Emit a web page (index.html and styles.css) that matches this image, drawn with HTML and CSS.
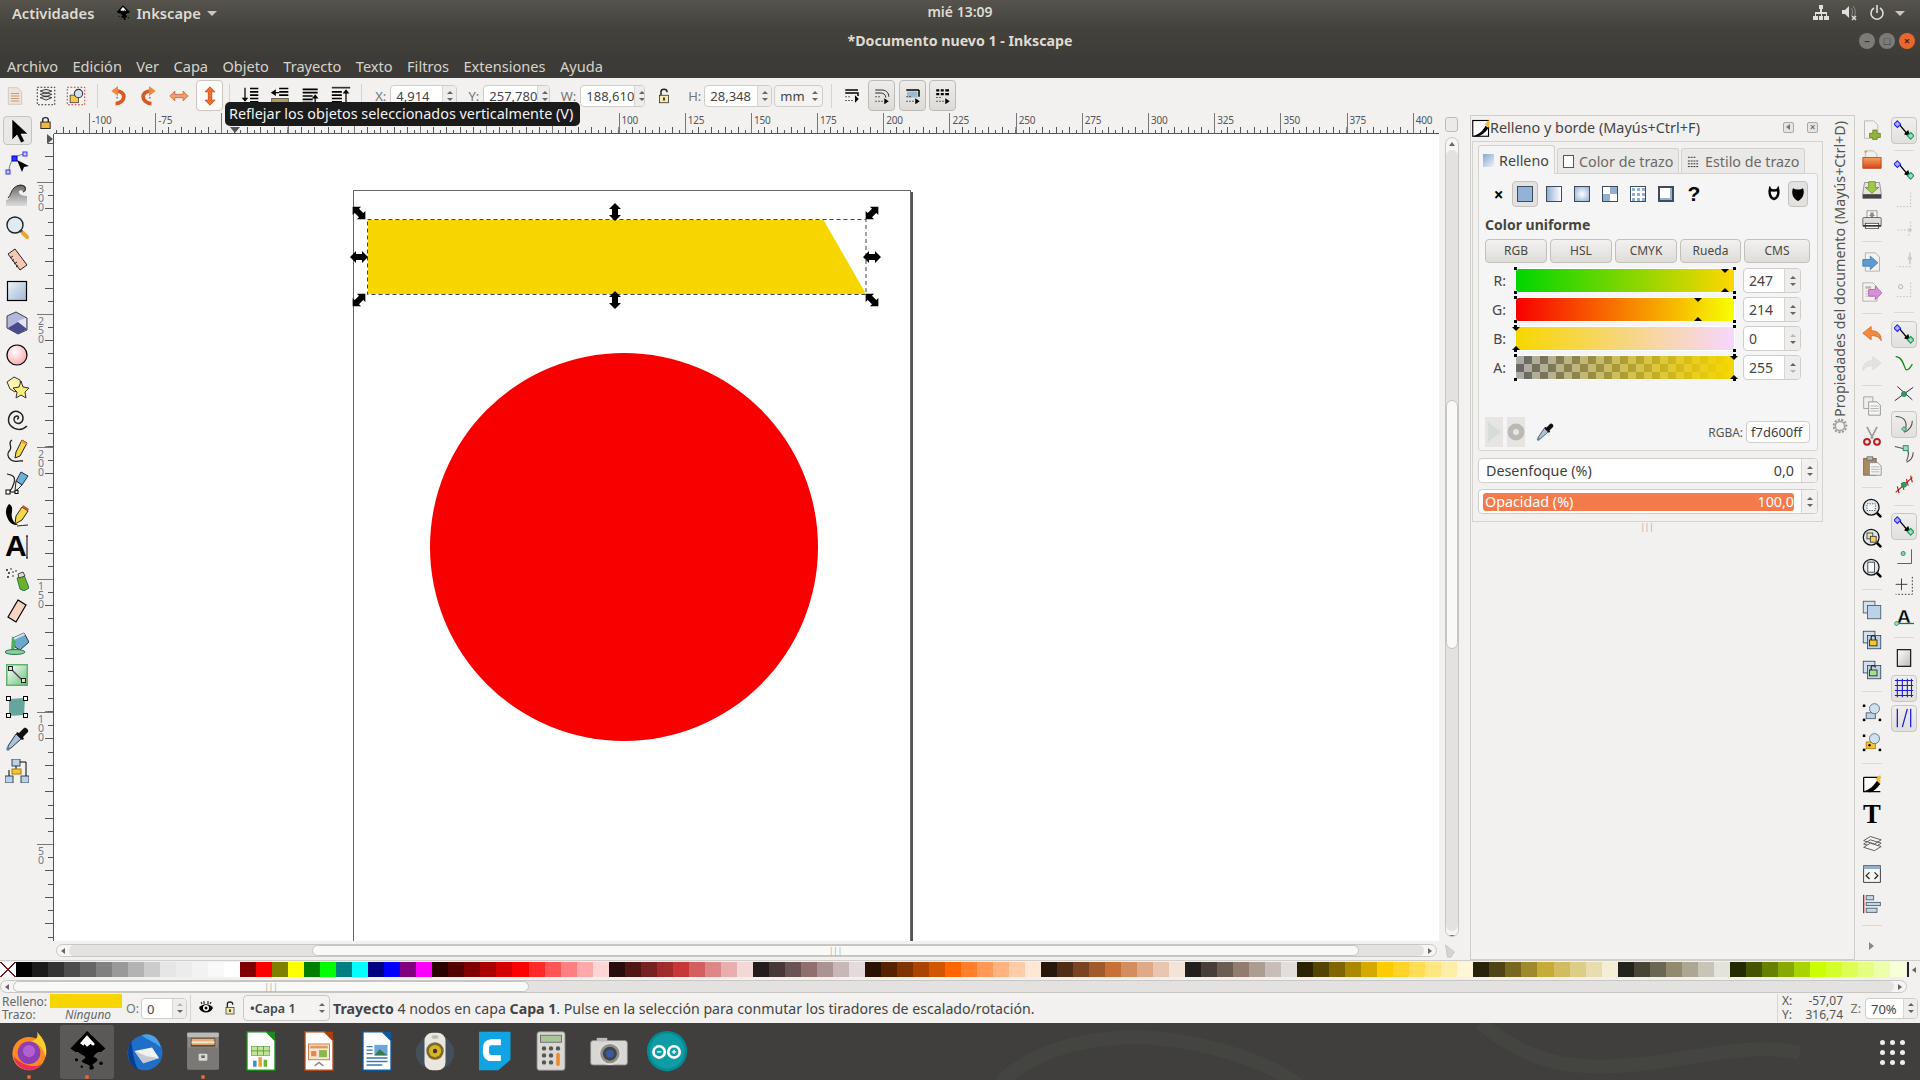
FILE: index.html
```html
<!DOCTYPE html>
<html lang="es">
<head>
  <meta charset="UTF-8">
  <title>Documento nuevo 1 - Inkscape</title>
  <link rel="stylesheet" href="styles.css">
</head>
<body>
<svg class="defs" xmlns="http://www.w3.org/2000/svg">
  <defs>
    <linearGradient id="gBlue" x1="0" y1="0" x2="1" y2="1"><stop offset="0" stop-color="#eef3f8"/><stop offset="1" stop-color="#9db9d3"/></linearGradient>
    <linearGradient id="gGrey" x1="0" y1="0" x2="0" y2="1"><stop offset="0" stop-color="#666"/><stop offset="1" stop-color="#ddd"/></linearGradient>
    <linearGradient id="gOrange" x1="0" y1="0" x2="0" y2="1"><stop offset="0" stop-color="#f5a25e"/><stop offset="1" stop-color="#d9431e"/></linearGradient>
    <radialGradient id="gPink" cx=".4" cy=".35" r=".7"><stop offset="0" stop-color="#fff"/><stop offset="1" stop-color="#fba6ac"/></radialGradient>
    <linearGradient id="gGradW" x1="0" y1="0" x2="1" y2="1"><stop offset="0" stop-color="#fff"/><stop offset="1" stop-color="#6cc27a"/></linearGradient>
    <linearGradient id="gPgrey" x1="0" y1="0" x2="1" y2="1"><stop offset="0" stop-color="#fff"/><stop offset="1" stop-color="#bbb"/></linearGradient>

    <symbol id="i-select" viewBox="0 0 24 24"><path fill="#000" stroke="#fff" stroke-width=".6" d="M6 0v21l5-5 4 8 3.6-1.8L15 15h7z"/></symbol>
    <symbol id="i-node" viewBox="0 0 24 24"><path fill="none" stroke="#777" d="M4 21C4 10 10 4 20 3"/><rect x="7" y="5" width="5" height="5" fill="#33f" stroke="#00c"/><rect x="18" y="1" width="4" height="4" fill="#ccd" stroke="#33f"/><rect x="1" y="19" width="4" height="4" fill="#ccd" stroke="#33f"/><path d="M12 9l12 6-5 1-2 5z"/></symbol>
    <symbol id="i-tweak" viewBox="0 0 24 24"><path fill="url(#gGrey)" d="M1 23v-6c4 0 4-5 6-9 3-5 9-8 13-5 2 2 1 6-2 6-1-3-5-2-4 1 1 2 4 3 8 3v10z"/><path fill="none" stroke="#222" d="M3 15c3-3 3-7 6-10 3-3 8-4 11-1 1 2 0 5-2 5"/></symbol>
    <symbol id="i-zoom" viewBox="0 0 24 24"><circle cx="10" cy="10" r="8" fill="#dfeaf2" stroke="#222" stroke-width="1.4"/><path stroke="#333" stroke-width="3" d="M15 15l3 3"/><path stroke="#e8a72c" stroke-width="4" stroke-linecap="round" d="M18 18l4 4"/></symbol>
    <symbol id="i-measure" viewBox="0 0 24 24"><path fill="#f6c9b4" stroke="#222" d="M3 7l7-5 12 16-7 5z"/><path stroke="#222" d="M5 11l3-2M7 14l2-1.500M9 17l3-2M11 20l2-1.500"/></symbol>
    <symbol id="i-rect" viewBox="0 0 24 24"><rect x="2.500" y="2.500" width="19" height="19" fill="url(#gBlue)" stroke="#000" stroke-width="1.200"/></symbol>
    <symbol id="i-3d" viewBox="0 0 24 24"><path fill="#b5b7dc" stroke="#444" d="M2 5l9-4 11 6v12l-9 4-11-6z"/><path fill="#e4e4f3" d="M13 22l0-12 8-3v11z"/><path fill="#4a4a8f" d="M3 17l10-6 9 7-9 5z"/></symbol>
    <symbol id="i-circle" viewBox="0 0 24 24"><circle cx="12" cy="12" r="10" fill="url(#gPink)" stroke="#000" stroke-width="1.200"/></symbol>
    <symbol id="i-star" viewBox="0 0 24 24"><path fill="#fdf2b0" stroke="#333" d="M2 7l7-5 6 3 1 6-6 6-5-3z"/><path fill="#f6ee7a" stroke="#333" d="M16 6l2 6 6 1-4 4 1 6-5-3-5 3 1-6-4-4 6-1z"/></symbol>
    <symbol id="i-spiral" viewBox="0 0 24 24"><path fill="none" stroke="#222" stroke-width="1.500" d="M12 12c2 0 2-3 0-3-3 0-4 4-2 6 3 3 8 1 8-4 0-5-6-8-10-6-5 3-6 10-2 14 4 4 11 5 16 0"/></symbol>
    <symbol id="i-pencil" viewBox="0 0 24 24"><path fill="none" stroke="#222" stroke-width="1.300" d="M7 1C2 4 8 8 5 11s-3 7 1 10 8 0 12 1"/><path fill="#f6d64a" stroke="#222" d="M17 1l5 3-7 13-5 2 1-6z"/><path fill="#f39c2a" d="M17 1l5 3-1 2-5-3z"/></symbol>
    <symbol id="i-pen" viewBox="0 0 24 24"><path fill="none" stroke="#222" stroke-width="1.200" d="M2 3c5 1 9 2 7 9-1 4-3 7-5 9"/><rect x="1" y="19" width="4" height="4" fill="#fff" stroke="#000"/><path stroke="#000" d="M5 21h6"/><rect x="10" y="19.500" width="3" height="3" fill="#fff" stroke="#000"/><path fill="#6fb0d8" stroke="#234" d="M16 1l7 4-6 9-6-4z"/><path fill="#eee" stroke="#222" d="M11 10l6 4-4 4-3 2z"/></symbol>
    <symbol id="i-callig" viewBox="0 0 24 24"><path d="M4 1c-5 6-3 12 0 17 3 4 6 4 9 4-6-3-7-9-6-13 0-3 1-6-3-8z"/><path fill="#f6d64a" stroke="#222" d="M17 4l6 4-6 9-7 4 1-8z"/><path fill="#c52" d="M18 2l6 4-1 2-6-4z"/><path fill="none" stroke="#222" d="M12 23c4 0 7-1 11-1"/></symbol>
    <symbol id="i-text" viewBox="0 0 24 24"><text x="0" y="21" class="svg-a">A</text><path stroke="#000" fill="none" d="M21 1h2M21 23h2M22 1v22"/></symbol>
    <symbol id="i-spray" viewBox="0 0 24 24"><path fill="#6fb02a" stroke="#275" d="M12 11l7-3 5 13-5 3-4-2z"/><path fill="#ddd" stroke="#444" d="M13 7l5-2 2 4-6 2z"/><g fill="#222"><circle cx="2" cy="3" r="1"/><circle cx="6" cy="2" r=".8"/><circle cx="4" cy="6" r="1"/><circle cx="8" cy="5" r=".8"/><circle cx="3" cy="10" r="1"/><circle cx="8" cy="9" r=".8"/><circle cx="11" cy="4" r=".8"/></g></symbol>
    <symbol id="i-eraser" viewBox="0 0 24 24"><path fill="#f7d3c4" stroke="#000" stroke-width="1.200" d="M13 1l8 5-10 17-8-5z"/></symbol>
    <symbol id="i-bucket" viewBox="0 0 24 24"><path fill="#6da7c9" stroke="#234" d="M8 7l11-5 5 9-9 8-5-3z"/><path fill="#cfe3ef" d="M8 7l11-5 1 2-11 5z"/><path fill="#4caf60" d="M7 5l4 6-2 8H6z"/><ellipse cx="10" cy="21" rx="10" ry="2.500" fill="#8ccf96" stroke="#275"/></symbol>
    <symbol id="i-gradient" viewBox="0 0 24 24"><rect x="1" y="1" width="22" height="22" fill="#5cb56a"/><rect x="2.500" y="2.500" width="19" height="19" fill="url(#gGradW)"/><path stroke="#444" stroke-width="1.300" d="M6 6l12 12"/><rect x="3.500" y="3.500" width="4" height="4" fill="#ddd" stroke="#222"/><rect x="16.500" y="15.500" width="4" height="4" fill="#ddd" stroke="#222"/></symbol>
    <symbol id="i-mesh" viewBox="0 0 24 24"><path fill="#65a59b" d="M4 4l16-1-1 17-15 1z"/><g fill="#fff" stroke="#000"><rect x="1.500" y="1.500" width="4" height="4"/><rect x="18.500" y="1.500" width="4" height="4"/><rect x="1.500" y="18.500" width="4" height="4"/><rect x="18.500" y="18.500" width="4" height="4"/></g></symbol>
    <symbol id="i-dropper" viewBox="0 0 24 24"><path fill="#111" d="M14 6l5-5c2-1 5 2 4 4l-5 5 1 2-2 1-6-6 1-2z"/><path fill="#a8c4d8" stroke="#334" d="M11 7l5 5L6 21l-3 1 0-3z"/><circle cx="3" cy="22" r="1.800" fill="#5a80a0"/></symbol>
    <symbol id="i-connector" viewBox="0 0 24 24"><g fill="#b9d2e8" stroke="#345"><rect x="7" y="0" width="8" height="7"/><rect x="0" y="17" width="8" height="7"/><rect x="16" y="17" width="8" height="7"/></g><path fill="none" stroke="#000" d="M15 3h6v14M11 7v4M4 17v-6"/><rect x="7" y="10" width="9" height="5" fill="#f6c62a" stroke="#a70"/></symbol>

    <symbol id="a-selall" viewBox="0 0 24 24"><path fill="#efe4d6" stroke="#c9c4bd" d="M4 2h11l5 5v15H4z"/><path fill="none" stroke="#b88c70" d="M7 9h10M7 12h10M7 15h10M7 18h10"/></symbol>
    <symbol id="a-layers" viewBox="0 0 24 24"><rect x="1.500" y="1.500" width="21" height="21" fill="none" stroke="#000" stroke-dasharray="2 2"/><path fill="#ddd" stroke="#222" d="M5 14l7-2 7 2-7 3zM5 10l7-2 7 2-7 3zM5 6l7-2 7 2-7 3z"/></symbol>
    <symbol id="a-touch" viewBox="0 0 24 24"><rect x="1.500" y="1.500" width="21" height="21" fill="none" stroke="#c01010" stroke-dasharray="2 2"/><rect x="5" y="11" width="10" height="9" fill="#f6c94a" stroke="#444"/><circle cx="15" cy="9" r="5" fill="#cfe0ee" stroke="#334" stroke-width="1.300"/></symbol>
    <symbol id="a-ccw" viewBox="0 0 24 24"><path fill="none" stroke="#d65a22" stroke-width="4.500" d="M10 6c6 0 9 3 9 7s-4 8-10 8"/><path fill="#ef8648" d="M12 0v12L4 6z"/><circle cx="11" cy="14" r="1" fill="#c53"/></symbol>
    <symbol id="a-cw" viewBox="0 0 24 24"><path fill="none" stroke="#d65a22" stroke-width="4.500" d="M14 6C8 6 5 9 5 13s4 8 10 8"/><path fill="#ef8648" d="M12 0v12l8-6z"/><circle cx="13" cy="14" r="1" fill="#c53"/></symbol>
    <symbol id="a-fliph" viewBox="0 0 24 24"><path fill="#f0a070" stroke="#c86a38" d="M1 12l6-6v4h10V6l6 6-6 6v-4H7v4z"/></symbol>
    <symbol id="a-flipv" viewBox="0 0 24 24"><path fill="#f26d28" stroke="#c84a18" d="M12 1l6 6h-4v10h4l-6 6-6-6h4V7H6z"/></symbol>
    <symbol id="a-bottom" viewBox="0 0 24 24"><path stroke="#000" stroke-width="2" d="M12 3h10M12 7h10M12 11h10M12 15h10M12 19h10"/><path stroke="#000" stroke-width="1.500" d="M6 2v14"/><path d="M2 14h8l-4 5zM1 21h10v2H1z"/></symbol>
    <symbol id="a-down" viewBox="0 0 24 24"><path stroke="#000" stroke-width="2" d="M11 3h11M11 7h11M11 11h11"/><path stroke="#000" stroke-width="1.500" d="M4 8h7"/><path d="M7 4v8L1 8z"/><rect x="2" y="15" width="20" height="6" fill="#b29a60" stroke="#554"/></symbol>
    <symbol id="a-up" viewBox="0 0 24 24"><path stroke="#000" stroke-width="2" d="M2 4h18M2 8h18M2 12h12M2 16h12M2 20h12"/><path stroke="#000" stroke-width="1.500" d="M17 21v-7"/><path d="M13 15l4-5 4 5z"/></symbol>
    <symbol id="a-top" viewBox="0 0 24 24"><rect x="1" y="1" width="22" height="2" fill="#333"/><path stroke="#000" stroke-width="2" d="M1 7h12M1 11h12M1 15h12M1 19h12"/><path stroke="#000" stroke-width="1.500" d="M18 22V8"/><path d="M14 9l4-5 4 5z"/></symbol>
    <symbol id="a-lock" viewBox="0 0 24 24"><path fill="none" stroke="#222" stroke-width="2" d="M8 11V6c0-4 8-4 8 0v1"/><rect x="6" y="11" width="12" height="10" fill="#f6ecb0" stroke="#222"/><rect x="11" y="14" width="2" height="4"/></symbol>
    <symbol id="a-t1" viewBox="0 0 24 24"><path fill="none" stroke="#000" stroke-width="2" d="M3 4h17M3 8h17v4"/><path fill="none" stroke="#000" d="M3 13h7M3 18h10" stroke-dasharray="2 2"/><path d="M19 12l5 5-5 5z" transform="translate(-3 -1)"/></symbol>
    <symbol id="a-t2" viewBox="0 0 24 24"><path fill="none" stroke="#222" stroke-width="1.300" d="M3 4h8c6 0 10 3 10 9M3 8h7c4 0 7 2 7 6"/><path fill="none" stroke="#000" stroke-dasharray="2 2" d="M3 13h6M3 19h10"/><path d="M15 15v8l6-4z"/></symbol>
    <symbol id="a-t3" viewBox="0 0 24 24"><path fill="#9fb9d2" d="M4 6h14v8H4z"/><path fill="none" stroke="#000" stroke-width="2" d="M3 4h17M20 4v9"/><path fill="none" stroke="#000" stroke-dasharray="2 2" d="M3 13h6M3 19h10"/><path d="M15 15v8l6-4z"/></symbol>
    <symbol id="a-t4" viewBox="0 0 24 24"><g fill="#000"><rect x="3" y="3" width="4" height="3"/><rect x="9" y="3" width="4" height="3"/><rect x="15" y="3" width="5" height="3"/><rect x="3" y="8" width="4" height="3"/><rect x="9" y="8" width="4" height="3"/><rect x="15" y="8" width="5" height="3"/></g><path fill="none" stroke="#000" stroke-dasharray="2 2" d="M3 14h6M3 19h10"/><path d="M15 15v8l6-4z"/></symbol>

    <symbol id="r-new" viewBox="0 0 24 24"><path fill="#f3f2f0" stroke="#b4b2ae" d="M3 1h11l5 5v16H3z"/><path fill="#95b23a" stroke="#6c8526" d="M13 12h5v4h4v5h-4v3h-5v-3H9v-5h4z"/></symbol>
    <symbol id="r-open" viewBox="0 0 24 24"><path fill="#f1efea" stroke="#b7b3ab" d="M4 1h10l4 4v6H4z"/><path fill="#d69a52" d="M3 1h3v2H3z"/><path fill="url(#gOrange)" stroke="#b04818" d="M1 9h22v13H1z"/></symbol>
    <symbol id="r-save" viewBox="0 0 24 24"><path fill="#e4e3df" stroke="#888" d="M3 3h18l2 13v6H1v-6z"/><path fill="#9cc94a" stroke="#6c9226" d="M8 2h8v7h4l-8 7-8-7h4z"/><rect x="1" y="17" width="22" height="5" fill="#444"/></symbol>
    <symbol id="r-print" viewBox="0 0 24 24"><rect x="6" y="1" width="12" height="9" fill="#f8f8f6" stroke="#888"/><path fill="#888" d="M10 3h4v3h2l-4 3-4-3h2z"/><rect x="1" y="9" width="22" height="10" rx="1" fill="#ddd" stroke="#555"/><rect x="4" y="16" width="16" height="6" fill="#fff" stroke="#444"/><rect x="1" y="18" width="22" height="2" fill="#333"/></symbol>
    <symbol id="r-import" viewBox="0 0 24 24"><path fill="#f3f2f0" stroke="#aaa" d="M4 1h12l5 5v17H4z"/><path fill="#5e9bd0" stroke="#3e78ad" d="M1 9h9V5l9 8-9 8v-4H1z"/></symbol>
    <symbol id="r-export" viewBox="0 0 24 24"><path fill="#f3f2f0" stroke="#aaa" d="M1 1h12l5 5v17H1z"/><path fill="#c9b5a8" d="M4 5h7v3H4z"/><path stroke="#bbb" d="M4 11h9M4 14h9M4 17h9"/><path fill="#d88fd8" stroke="#a860a8" d="M8 9h8V5l8 8-8 8v-4H8z"/></symbol>
    <symbol id="r-undo" viewBox="0 0 24 24"><path fill="#f08a40" stroke="#d26a20" d="M11 3v5c7 0 12 3 12 12-3-5-6-6-12-6v5L1 11z"/></symbol>
    <symbol id="r-redo" viewBox="0 0 24 24"><path fill="#e3e2e0" stroke="#dcdbd9" d="M13 3v5C6 8 1 11 1 20c3-5 6-6 12-6v5l10-8z"/></symbol>
    <symbol id="r-copy" viewBox="0 0 24 24"><path fill="#eee" stroke="#9a9a9a" d="M2 1h11v14H2z"/><path fill="#f6f6f5" stroke="#888" d="M8 7h10l4 4v12H8z"/><path stroke="#aaa" d="M10 12h10M10 15h10M10 18h10"/></symbol>
    <symbol id="r-cut" viewBox="0 0 24 24"><path fill="none" stroke="#999" stroke-width="2" d="M6 1l7 14M18 1l-7 14"/><circle cx="6" cy="19" r="3.500" fill="none" stroke="#bb2020" stroke-width="2.400"/><circle cx="18" cy="19" r="3.500" fill="none" stroke="#bb2020" stroke-width="2.400"/></symbol>
    <symbol id="r-paste" viewBox="0 0 24 24"><rect x="2" y="3" width="15" height="20" fill="#a98a62" stroke="#7a5f3e"/><rect x="6" y="1" width="7" height="4" fill="#bbb" stroke="#666"/><path fill="#f6f6f5" stroke="#888" d="M9 8h10l4 4v11H9z"/><path stroke="#aaa" d="M11 13h10M11 16h10M11 19h10"/></symbol>
    <symbol id="r-zoomsel" viewBox="0 0 24 24"><circle cx="11" cy="11" r="9.500" fill="#dde8f0" stroke="#111" stroke-width="1.500"/><rect x="6" y="7" width="10" height="8" fill="#fff" stroke="#333" stroke-dasharray="1.500 1.500"/><path stroke="#000" stroke-width="3" d="M18 18l5 5"/></symbol>
    <symbol id="r-zoomdraw" viewBox="0 0 24 24"><circle cx="11" cy="11" r="9.500" fill="#dde8f0" stroke="#111" stroke-width="1.500"/><rect x="6" y="6" width="7" height="7" fill="#f6e4a0" stroke="#333"/><rect x="10" y="10" width="7" height="7" fill="#f6d25a" stroke="#333"/><path stroke="#000" stroke-width="3" d="M18 18l5 5"/></symbol>
    <symbol id="r-zoompage" viewBox="0 0 24 24"><circle cx="11" cy="11" r="9.500" fill="#dde8f0" stroke="#111" stroke-width="1.500"/><rect x="7" y="5" width="8" height="12" fill="#fff" stroke="#333"/><path stroke="#000" stroke-width="3" d="M18 18l5 5"/></symbol>
    <symbol id="r-dup" viewBox="0 0 24 24"><rect x="1.500" y="1.500" width="14" height="14" fill="#d3e1ee" stroke="#456"/><rect x="6.500" y="6.500" width="16" height="16" fill="#bcd2e6" stroke="#456"/></symbol>
    <symbol id="r-clone" viewBox="0 0 24 24"><rect x="1.500" y="1.500" width="14" height="14" fill="#d3e1ee" stroke="#345"/><rect x="6.500" y="6.500" width="16" height="16" fill="#bcd2e6" stroke="#345"/><path fill="none" stroke="#222" stroke-width="1.500" d="M11 12V9c0-3 5-3 5 0v3"/><rect x="9" y="12" width="9" height="7" fill="#f6c62a" stroke="#222"/></symbol>
    <symbol id="r-unclone" viewBox="0 0 24 24"><rect x="1.500" y="1.500" width="14" height="14" fill="#d3e1ee" stroke="#345"/><rect x="6.500" y="6.500" width="16" height="16" fill="#bcd2e6" stroke="#345"/><path fill="none" stroke="#222" stroke-width="1.500" d="M11 12V9c0-3 5-3 5 0"/><rect x="9" y="12" width="9" height="7" fill="#a8e08a" stroke="#222"/></symbol>
    <symbol id="r-group" viewBox="0 0 24 24"><g fill="#000"><rect x="1" y="3" width="3" height="3"/><rect x="1" y="20" width="3" height="3"/><rect x="20" y="20" width="3" height="3"/></g><rect x="5" y="13" width="11" height="7" fill="#bcd2e6" stroke="#456"/><circle cx="15" cy="8" r="6" fill="#cfe0ee" stroke="#567"/></symbol>
    <symbol id="r-ungroup" viewBox="0 0 24 24"><g fill="#000"><rect x="1" y="3" width="3" height="3"/><rect x="1" y="20" width="3" height="3"/><rect x="20" y="20" width="3" height="3"/></g><rect x="5" y="12" width="11" height="8" fill="#f6c62a" stroke="#a70"/><circle cx="15" cy="8" r="6" fill="#cfe0ee" stroke="#567"/><circle cx="9" cy="16" r="1.500"/></symbol>
    <symbol id="r-fill" viewBox="0 0 24 24"><path fill="#fff" d="M1 4h21v17H1z"/><path stroke="#000" stroke-width="1.500" fill="none" d="M2 4h20M2 4v17h20"/><path d="M1 21c8-2 13-7 17-13l4 4c-4 5-8 9-12 10z"/><path fill="#f6bb2a" d="M16 6l6-5v11z"/></symbol>
    <symbol id="r-textfont" viewBox="0 0 24 24"><text x="12" y="23" class="svg-t">T</text></symbol>
    <symbol id="r-layers" viewBox="0 0 24 24"><path fill="#f3f3f2" stroke="#444" d="M2 8l8-5 13 4-8 5zM2 12l8-5 13 4-8 5z"/><path fill="#f3f3f2" stroke="#444" d="M2 16l8-5 13 4-8 5z"/></symbol>
    <symbol id="r-xml" viewBox="0 0 24 24"><rect x="2" y="2" width="20" height="20" fill="#f6f6f5" stroke="#222"/><rect x="2" y="2" width="20" height="4" fill="#8fb0cc"/><path fill="none" stroke="#222" stroke-width="1.500" d="M9 10l-4 4 4 4M15 10l4 4-4 4"/></symbol>
    <symbol id="r-align" viewBox="0 0 24 24"><path stroke="#b02020" stroke-width="1.600" d="M2 1v22"/><g fill="#c3d6e8" stroke="#456"><rect x="5" y="2" width="9" height="5"/><rect x="5" y="10" width="17" height="4"/><rect x="5" y="17" width="13" height="5"/></g></symbol>

    <symbol id="s-snap" viewBox="0 0 24 24"><path stroke="#000" stroke-width="1.500" d="M6 5l11 13"/><path d="M20 20l-8-3 5-5z"/><path fill="#aab2ff" stroke="#22f" stroke-width="1.300" d="M4 1l4 4-4 4-4-4z"/><path fill="#9fdcb0" stroke="#196" stroke-width="1.300" d="M20 15l4 4-4 4-4-4z"/></symbol>
    <symbol id="s-bbox" viewBox="0 0 24 24"><path fill="none" stroke="#bbb" stroke-dasharray="2 2" d="M20 3v17H3"/></symbol>
    <symbol id="s-edge" viewBox="0 0 24 24"><path fill="none" stroke="#bbb" stroke-dasharray="2 2" d="M20 2v10H3M18 19v-5"/><circle cx="19" cy="12" r="2.300" fill="#ccc"/></symbol>
    <symbol id="s-mid" viewBox="0 0 24 24"><path fill="none" stroke="#bbb" stroke-dasharray="2 2" d="M20 20H3"/><path stroke="#ccc" stroke-width="2" d="M19 3v14"/><circle cx="19" cy="10" r="2.500" fill="#ccc"/></symbol>
    <symbol id="s-corner" viewBox="0 0 24 24"><path fill="none" stroke="#bbb" stroke-dasharray="2 2" d="M20 3v17H3"/><circle cx="8" cy="8" r="2.500" fill="#eee" stroke="#aaa"/></symbol>
    <symbol id="s-curve" viewBox="0 0 24 24"><path fill="none" stroke="#0a8a0a" stroke-width="1.500" d="M2 3c10 0 10 16 13 16s5-3 7-7"/></symbol>
    <symbol id="s-cross" viewBox="0 0 24 24"><path stroke="#333" stroke-width="1.200" d="M1 20L23 4M4 3l18 16"/><circle cx="12" cy="12" r="3" fill="#3a9a4a" stroke="#186"/></symbol>
    <symbol id="s-smooth" viewBox="0 0 24 24"><path fill="none" stroke="#555" stroke-width="1.300" d="M2 3c10 0 14 6 12 15M22 8c0 6-3 11-10 14"/><path fill="#8fd0a0" stroke="#186" d="M12 15l3 3-3 3-3-3z"/></symbol>
    <symbol id="s-cusp" viewBox="0 0 24 24"><path fill="none" stroke="#555" stroke-width="1.300" d="M1 3l12 3c6 2 5 8 2 14M23 10c0 6-3 10-8 12"/><rect x="11" y="2" width="6" height="6" fill="#9fdcb0" stroke="#186"/></symbol>
    <symbol id="s-path" viewBox="0 0 24 24"><path stroke="#c01010" stroke-width="1.300" d="M2 22L22 4"/><path stroke="#c01010" stroke-width="1.300" d="M4 15l2 8M9 11l3 8M15 6l2 8M20 2l2 8"/><circle cx="12" cy="13" r="3" fill="#3a9a4a" stroke="#186"/></symbol>
    <symbol id="s-page" viewBox="0 0 24 24"><path fill="none" stroke="#444" d="M21 4v17H4"/><circle cx="11" cy="9" r="2.500" fill="#8fd0a0" stroke="#186"/></symbol>
    <symbol id="s-center" viewBox="0 0 24 24"><path stroke="#222" d="M2 10h14M9 3v14"/><path fill="none" stroke="#222" stroke-dasharray="2 2" d="M22 1v21H2"/></symbol>
    <symbol id="s-text" viewBox="0 0 24 24"><text x="12" y="20" class="svg-a2">A</text><path stroke="#0a8a0a" stroke-width="1.500" d="M4 21h20"/><path fill="#9fdcb0" stroke="#186" d="M3 18l3 3-3 3-3-3z"/></symbol>
    <symbol id="s-pageb" viewBox="0 0 24 24"><rect x="4" y="2" width="16" height="20" fill="url(#gPgrey)" stroke="#111" stroke-width="1.400"/></symbol>
    <symbol id="s-grid" viewBox="0 0 24 24"><path stroke="#1a1ae0" stroke-width="1.300" fill="none" d="M1 3h22M1 9h22M1 15h22M1 21h22M4 1v22M10 1v22M16 1v22M21 1v22"/></symbol>
    <symbol id="s-guide" viewBox="0 0 24 24"><path stroke="#1a1ae0" stroke-width="1.500" d="M4 1v22M20 1v22M10 23L16 1"/></symbol>

    <symbol id="p-fillstroke" viewBox="0 0 24 24"><rect x="1" y="2" width="21" height="21" fill="#fff" stroke="#000" stroke-width="1.500"/><path d="M1 23c8-2 14-8 17-14l4 3c-4 6-9 10-14 11z"/><path fill="#f6bb2a" d="M17 7l6-6v11z"/></symbol>
    <symbol id="p-logo" viewBox="0 0 48 48"><path d="M24 1L5 21l6 4h3c2 3 7 3 8 6 1 2-5 3-4 5s8 3 9 5c1 2-2 3 1 4s5-2 3-4 2-3 4-5 1-4-3-5c-2-1 3-5 5-6h3l5-4z"/><path fill="#fff" d="M24 6l-8 9 4 3 1-2 3 3 4-3 3 2 2-2z"/><circle cx="40" cy="38" r="2"/><circle cx="12" cy="34" r="1.800"/><circle cx="18" cy="42" r="1.300"/></symbol>
  </defs>
</svg>

<header class="topbar">
  <div class="topbar-left"><span class="act">Actividades</span><svg class="ico-logo"><use href="#p-logo"/></svg><span class="act">Inkscape</span><i class="caret"></i></div>
  <div class="clock">mié 13:09</div>
  <div class="topbar-right">
    <svg class="tray" viewBox="0 0 16 16"><path fill="#e0dfdb" d="M6 0h4v4H9v3h5v4h2v4h-5v-4h2V9H9v2h1v4H6v-4h2V9H3v2h2v4H0v-4h2V7h5V4H6z"/></svg>
    <svg class="tray" viewBox="0 0 16 16"><path fill="#e0dfdb" d="M1 5h3l4-4v12L4 9H1z"/><path fill="none" stroke="#8e8d88" d="M10 3c2 2 2 6 0 8M12 1c3 3 3 9 0 12"/><path stroke="#e0dfdb" stroke-width="1.500" d="M11 11l4 4M15 11l-4 4"/></svg>
    <svg class="tray" viewBox="0 0 16 16"><path fill="none" stroke="#e0dfdb" stroke-width="1.600" d="M5 3a6 6 0 1 0 6 0M8 0v8"/></svg>
    <i class="caret"></i>
  </div>
</header>
<div class="titlebar">
  <span class="title">*Documento nuevo 1 - Inkscape</span>
  <div class="wbtns"><span class="wbtn">–</span><span class="wbtn">□</span><span class="wbtn close">×</span></div>
</div>
<nav class="menubar">
  <a>Archivo</a><a>Edición</a><a>Ver</a><a>Capa</a><a>Objeto</a><a>Trayecto</a><a>Texto</a><a>Filtros</a><a>Extensiones</a><a>Ayuda</a>
</nav>

<div class="toolbar">
  <span class="tb"><svg class="ic20"><use href="#a-selall"/></svg></span>
  <span class="tb"><svg class="ic20"><use href="#a-layers"/></svg></span>
  <span class="tb"><svg class="ic20"><use href="#a-touch"/></svg></span>
  <span class="tb-sep sep12"></span>
  <span class="tb"><svg class="ic20"><use href="#a-ccw"/></svg></span>
  <span class="tb"><svg class="ic20"><use href="#a-cw"/></svg></span>
  <span class="tb"><svg class="ic20"><use href="#a-fliph"/></svg></span>
  <span class="tb"><span class="tb-on"><svg class="ic20"><use href="#a-flipv"/></svg></span></span>
  <span class="tb-sep"></span>
  <span class="tb"><svg class="ic20"><use href="#a-bottom"/></svg></span>
  <span class="tb"><svg class="ic20"><use href="#a-down"/></svg></span>
  <span class="tb"><svg class="ic20"><use href="#a-up"/></svg></span>
  <span class="tb"><svg class="ic20"><use href="#a-top"/></svg></span>
  <span class="tb-sep"></span>
  <label class="lbl l-x">X:</label>
  <div class="spin s-x"><span class="val">4,914</span><span class="arrows"><i class="up"></i><i class="down"></i></span></div>
  <label class="lbl l-y">Y:</label>
  <div class="spin s-x"><span class="val">257,780</span><span class="arrows"><i class="up"></i><i class="down"></i></span></div>
  <label class="lbl l-w">W:</label>
  <div class="spin s-w"><span class="val">188,610</span><span class="arrows"><i class="up"></i><i class="down"></i></span></div>
  <span class="lock-box"><svg class="ic18"><use href="#a-lock"/></svg></span>
  <label class="lbl l-h">H:</label>
  <div class="spin s-h"><span class="val">28,348</span><span class="arrows"><i class="up"></i><i class="down"></i></span></div>
  <div class="spin s-unit"><span class="val">mm</span><span class="arrows plain"><i class="up"></i><i class="down"></i></span></div>
  <span class="tb-sep sep16"></span>
  <span class="tb tb26"><svg class="ic18"><use href="#a-t1"/></svg></span>
  <span class="tb-on bt1"><svg class="ic18"><use href="#a-t2"/></svg></span>
  <span class="tb-on bt2"><svg class="ic18"><use href="#a-t3"/></svg></span>
  <span class="tb-on bt3"><svg class="ic18"><use href="#a-t4"/></svg></span>
</div>

<div class="work">
  <aside class="tools">
    <span class="tool active"><svg class="ic24"><use href="#i-select"/></svg></span>
    <span class="tool"><svg class="ic24"><use href="#i-node"/></svg></span>
    <span class="tool"><svg class="ic24"><use href="#i-tweak"/></svg></span>
    <span class="tool"><svg class="ic24"><use href="#i-zoom"/></svg></span>
    <span class="tool"><svg class="ic24"><use href="#i-measure"/></svg></span>
    <span class="tool"><svg class="ic24"><use href="#i-rect"/></svg></span>
    <span class="tool"><svg class="ic24"><use href="#i-3d"/></svg></span>
    <span class="tool"><svg class="ic24"><use href="#i-circle"/></svg></span>
    <span class="tool"><svg class="ic24"><use href="#i-star"/></svg></span>
    <span class="tool"><svg class="ic24"><use href="#i-spiral"/></svg></span>
    <span class="tool"><svg class="ic24"><use href="#i-pencil"/></svg></span>
    <span class="tool"><svg class="ic24"><use href="#i-pen"/></svg></span>
    <span class="tool"><svg class="ic24"><use href="#i-callig"/></svg></span>
    <span class="tool"><svg class="ic24"><use href="#i-text"/></svg></span>
    <span class="tool"><svg class="ic24"><use href="#i-spray"/></svg></span>
    <span class="tool"><svg class="ic24"><use href="#i-eraser"/></svg></span>
    <span class="tool"><svg class="ic24"><use href="#i-bucket"/></svg></span>
    <span class="tool"><svg class="ic24"><use href="#i-gradient"/></svg></span>
    <span class="tool"><svg class="ic24"><use href="#i-mesh"/></svg></span>
    <span class="tool"><svg class="ic24"><use href="#i-dropper"/></svg></span>
    <span class="tool"><svg class="ic24"><use href="#i-connector"/></svg></span>
  </aside>

  <main class="desk">
    <div class="corner"><svg class="corner-lock" viewBox="0 0 14 14"><path fill="none" stroke="#222" stroke-width="1.500" d="M4 7V4c0-3 6-3 6 0v3"/><rect x="2" y="6.500" width="10" height="7" fill="#f4b93a" stroke="#222"/></svg></div>
    <div class="hruler">
      <span class="hcell first"></span><span class="hcell">-100</span><span class="hcell">-75</span><span class="hcell"></span><span class="hcell"></span><span class="hcell"></span><span class="hcell"></span><span class="hcell"></span><span class="hcell"></span><span class="hcell">100</span><span class="hcell">125</span><span class="hcell">150</span><span class="hcell">175</span><span class="hcell">200</span><span class="hcell">225</span><span class="hcell">250</span><span class="hcell">275</span><span class="hcell">300</span><span class="hcell">325</span><span class="hcell">350</span><span class="hcell">375</span><span class="hcell">400</span>
      <i class="pointer"></i>
    </div>
    <div class="rcorner"><span class="rcorner-btn"></span></div>

    <div class="vruler">
      <span class="vcell first"></span><span class="vcell">300</span><span class="vcell">250</span><span class="vcell">200</span><span class="vcell">150</span><span class="vcell">100</span><span class="vcell">50</span><span class="vcell"></span>
      <i class="pointer-v"></i>
    </div>
    <div class="canvas">
      <svg class="drawing" viewBox="54 134 1385 807">
        <defs>
          <path id="hnd" d="M0-9L6-3H3V3H6L0 9-6 3H-3V-3H-6Z"/>
        </defs>
        <rect x="911" y="192" width="2" height="760" fill="#555"/>
        <rect x="353.500" y="190.500" width="557" height="800" fill="#fff" stroke="#666"/>
        <path d="M367 219H823L866 294H367Z" fill="#f7d600"/>
        <rect x="367.500" y="219.500" width="498.500" height="75" fill="none" stroke="#fff"/>
        <rect x="367.500" y="219.500" width="498.500" height="75" fill="none" stroke="#444" stroke-dasharray="4 3"/>
        <circle cx="624" cy="547" r="194" fill="#f90000"/>
        <use href="#hnd" transform="translate(359 213) rotate(-45)"/>
        <use href="#hnd" transform="translate(872 213) rotate(45)"/>
        <use href="#hnd" transform="translate(359 300) rotate(45)"/>
        <use href="#hnd" transform="translate(872 300) rotate(-45)"/>
        <use href="#hnd" transform="translate(615 212)"/>
        <use href="#hnd" transform="translate(615 300)"/>
        <use href="#hnd" transform="translate(359 257) rotate(90)"/>
        <use href="#hnd" transform="translate(872 257) rotate(90)"/>
      </svg>
    </div>
    <div class="vscroll"><div class="vtrack"><i class="sarrow up"></i><div class="vtrough"><div class="vthumb"></div></div><i class="sarrow down"></i></div></div>

    <div class="blank"></div>
    <div class="hscroll"><i class="sarrow left"></i><div class="htrough"><div class="hthumb"><span class="grip">|||</span></div></div><i class="sarrow right"></i></div>
    <div class="cms"><svg class="ic14" viewBox="0 0 16 16"><path fill="#d5d4d1" stroke="#c5c4c0" d="M3 1l10 8-4 6H5z"/></svg></div>
  </main>

  <section class="panel">
    <div class="ptitle">
      <svg class="ic18"><use href="#p-fillstroke"/></svg>
      <span class="ptitle-text">Relleno y borde (Mayús+Ctrl+F)</span>
      <span class="pbtn b1"><i class="pb-left"></i></span><span class="pbtn b2">×</span>
    </div>
    <div class="pbody">
      <div class="frame">
        <div class="tabs">
          <span class="tab on"><i class="tab-ic flat"></i>Relleno</span>
          <span class="tab"><i class="tab-ic empty"></i>Color de trazo</span>
          <span class="tab tab-wide"><svg class="tab-svg" viewBox="0 0 14 14"><path stroke="#222" d="M1 3h9M1 7h12M1 10h12M1 13h12" stroke-dasharray="2 1"/></svg>Estilo de trazo</span>
        </div>
        <div class="page">
          <div class="ftypes">
            <span class="ft x">×</span>
            <span class="ft flatb"><i class="sw s-flat"></i></span>
            <span class="ft"><i class="sw s-lin"></i></span>
            <span class="ft"><i class="sw s-rad"></i></span>
            <span class="ft"><i class="sw s-pat"></i></span>
            <span class="ft"><i class="sw s-mesh"></i></span>
            <span class="ft"><i class="sw s-swatch"></i></span>
            <span class="ft q">?</span>
            <span class="ft rule rule1"><svg class="ic16" viewBox="0 0 16 16"><path fill="none" stroke="#000" stroke-width="2.500" d="M4 3c-1 4 0 9 4 10 4-1 5-6 4-10-1 2-7 2-8 0z"/></svg></span>
            <span class="ft rule flatb2"><svg class="ic16" viewBox="0 0 16 16"><path d="M3 2c2 2 8 2 10 0 2 5 0 11-5 13C3 13 1 7 3 2z"/></svg></span>
          </div>
          <div class="heading">Color uniforme</div>
          <div class="modes"><span class="mode m1">RGB</span><span class="mode m1">HSL</span><span class="mode m1">CMYK</span><span class="mode m2">Rueda</span><span class="mode m3">CMS</span></div>
          <div class="sliders">
            <div class="srow"><span class="slabel">R:</span><div class="sbar b-r"><i class="tick top" style="left:209px"></i><i class="tick bot" style="left:209px"></i><i class="dot tl"></i><i class="dot tr"></i><i class="dot bl"></i><i class="dot br"></i></div><div class="spin s-c"><span class="val">247</span><span class="arrows"><i class="up"></i><i class="down"></i></span></div></div>
            <div class="srow"><span class="slabel">G:</span><div class="sbar b-g"><i class="tick top" style="left:182px"></i><i class="tick bot" style="left:182px"></i><i class="dot tl"></i><i class="dot tr"></i><i class="dot bl"></i><i class="dot br"></i></div><div class="spin s-c"><span class="val">214</span><span class="arrows"><i class="up"></i><i class="down"></i></span></div></div>
            <div class="srow"><span class="slabel">B:</span><div class="sbar b-b"><i class="tick top" style="left:0"></i><i class="tick bot" style="left:0"></i><i class="dot tl"></i><i class="dot tr"></i><i class="dot bl"></i><i class="dot br"></i></div><div class="spin s-c"><span class="val">0</span><span class="arrows"><i class="up dim"></i><i class="down"></i></span></div></div>
            <div class="srow"><span class="slabel">A:</span><div class="sbar b-a"><i class="tick top" style="left:218px"></i><i class="tick bot" style="left:218px"></i><i class="dot tl"></i><i class="dot tr"></i><i class="dot bl"></i><i class="dot br"></i></div><div class="spin s-c"><span class="val">255</span><span class="arrows"><i class="up"></i><i class="down dim"></i></span></div></div>
          </div>
          <div class="pickers">
            <span class="picker"><svg viewBox="0 0 18 30" class="pk"><path fill="#d8dcd8" d="M3 5l13 10L3 25z"/></svg></span>
            <span class="picker"><svg viewBox="0 0 18 30" class="pk"><circle cx="9" cy="15" r="8.500" fill="#bcb8b4"/><circle cx="9" cy="15" r="3" fill="#e8e6e4"/></svg></span>
            <svg class="ic18 pk-drop"><use href="#i-dropper"/></svg>
            <span class="rgba-l">RGBA:</span>
            <span class="rgba-i">f7d600ff</span>
          </div>
        </div>
        <div class="pspin"><span class="pspin-l">Desenfoque (%)</span><span class="pspin-v">0,0</span><span class="arrows"><i class="up"></i><i class="down"></i></span></div>
        <div class="pspin"><span class="pfill"><span class="pspin-l">Opacidad (%)</span><span class="pspin-v">100,0</span></span><span class="arrows"><i class="up"></i><i class="down"></i></span></div>
      </div>
      <div class="vtab">
        <span class="vtab-t">Propiedades del documento (Mayús+Ctrl+D)</span>
        <svg class="gear" viewBox="0 0 24 24"><path fill="none" stroke="#9b9a97" stroke-width="3" stroke-dasharray="3.200 2.200" d="M12 2.500a9.500 9.500 0 1 0 .01 0"/><circle cx="12" cy="12" r="7" fill="none" stroke="#a5a4a1" stroke-width="2.400"/></svg>
      </div>
    </div>
    <div class="phandle">|||</div>
  </section>

  <aside class="rbar">
    <div class="rcol">
      <span class="rb"><svg class="ic20"><use href="#r-new"/></svg></span>
      <span class="rb"><svg class="ic20"><use href="#r-open"/></svg></span>
      <span class="rb"><svg class="ic20"><use href="#r-save"/></svg></span>
      <span class="rb"><svg class="ic20"><use href="#r-print"/></svg></span>
      <span class="rsep"></span>
      <span class="rb"><svg class="ic20"><use href="#r-import"/></svg></span>
      <span class="rb"><svg class="ic20"><use href="#r-export"/></svg></span>
      <span class="rsep"></span>
      <span class="rb"><svg class="ic20"><use href="#r-undo"/></svg></span>
      <span class="rb"><svg class="ic20"><use href="#r-redo"/></svg></span>
      <span class="rsep"></span>
      <span class="rb"><svg class="ic20"><use href="#r-copy"/></svg></span>
      <span class="rb"><svg class="ic20"><use href="#r-cut"/></svg></span>
      <span class="rb"><svg class="ic20"><use href="#r-paste"/></svg></span>
      <span class="rsep"></span>
      <span class="rb"><svg class="ic20"><use href="#r-zoomsel"/></svg></span>
      <span class="rb"><svg class="ic20"><use href="#r-zoomdraw"/></svg></span>
      <span class="rb"><svg class="ic20"><use href="#r-zoompage"/></svg></span>
      <span class="rsep"></span>
      <span class="rb"><svg class="ic20"><use href="#r-dup"/></svg></span>
      <span class="rb"><svg class="ic20"><use href="#r-clone"/></svg></span>
      <span class="rb"><svg class="ic20"><use href="#r-unclone"/></svg></span>
      <span class="rsep"></span>
      <span class="rb"><svg class="ic20"><use href="#r-group"/></svg></span>
      <span class="rb"><svg class="ic20"><use href="#r-ungroup"/></svg></span>
      <span class="rsep"></span>
      <span class="rb"><svg class="ic20"><use href="#r-fill"/></svg></span>
      <span class="rb"><svg class="ic20"><use href="#r-textfont"/></svg></span>
      <span class="rb"><svg class="ic20"><use href="#r-layers"/></svg></span>
      <span class="rb"><svg class="ic20"><use href="#r-xml"/></svg></span>
      <span class="rb"><svg class="ic20"><use href="#r-align"/></svg></span>
      <span class="rsep"></span>
      <span class="rb"><i class="more"></i></span>
    </div>
    <div class="rcol">
      <span class="rb on"><svg class="ic20"><use href="#s-snap"/></svg></span>
      <span class="rsep first"></span>
      <span class="rb"><svg class="ic20"><use href="#s-snap"/></svg></span>
      <span class="rb"><svg class="ic20"><use href="#s-bbox"/></svg></span>
      <span class="rb"><svg class="ic20"><use href="#s-edge"/></svg></span>
      <span class="rb"><svg class="ic20"><use href="#s-mid"/></svg></span>
      <span class="rb"><svg class="ic20"><use href="#s-corner"/></svg></span>
      <span class="rsep wide"></span>
      <span class="rb on"><svg class="ic20"><use href="#s-snap"/></svg></span>
      <span class="rb"><svg class="ic20"><use href="#s-curve"/></svg></span>
      <span class="rb"><svg class="ic20"><use href="#s-cross"/></svg></span>
      <span class="rb on"><svg class="ic20"><use href="#s-smooth"/></svg></span>
      <span class="rb"><svg class="ic20"><use href="#s-cusp"/></svg></span>
      <span class="rb"><svg class="ic20"><use href="#s-path"/></svg></span>
      <span class="rsep"></span>
      <span class="rb on"><svg class="ic20"><use href="#s-snap"/></svg></span>
      <span class="rb"><svg class="ic20"><use href="#s-page"/></svg></span>
      <span class="rb"><svg class="ic20"><use href="#s-center"/></svg></span>
      <span class="rb"><svg class="ic20"><use href="#s-text"/></svg></span>
      <span class="rsep"></span>
      <span class="rb"><svg class="ic20"><use href="#s-pageb"/></svg></span>
      <span class="rb on"><svg class="ic20"><use href="#s-grid"/></svg></span>
      <span class="rb on"><svg class="ic20"><use href="#s-guide"/></svg></span>
    </div>
  </aside>
</div>

<div class="palette">
  <span class="none-sw"></span><i style="background:#000000"></i><i style="background:#1a1a1a"></i><i style="background:#333333"></i><i style="background:#4d4d4d"></i><i style="background:#666666"></i><i style="background:#808080"></i><i style="background:#999999"></i><i style="background:#b3b3b3"></i><i style="background:#cccccc"></i><i style="background:#e6e6e6"></i><i style="background:#ececec"></i><i style="background:#f2f2f2"></i><i style="background:#f9f9f9"></i><i style="background:#ffffff"></i><i style="background:#800000"></i><i style="background:#ff0000"></i><i style="background:#808000"></i><i style="background:#ffff00"></i><i style="background:#008000"></i><i style="background:#00ff00"></i><i style="background:#008080"></i><i style="background:#00ffff"></i><i style="background:#000080"></i><i style="background:#0000ff"></i><i style="background:#800080"></i><i style="background:#ff00ff"></i><i style="background:#2b0000"></i><i style="background:#550000"></i><i style="background:#800000"></i><i style="background:#aa0000"></i><i style="background:#d40000"></i><i style="background:#ff0000"></i><i style="background:#ff2a2a"></i><i style="background:#ff5555"></i><i style="background:#ff8080"></i><i style="background:#ffaaaa"></i><i style="background:#ffd5d5"></i><i style="background:#280b0b"></i><i style="background:#501616"></i><i style="background:#782121"></i><i style="background:#a02c2c"></i><i style="background:#c83737"></i><i style="background:#d35f5f"></i><i style="background:#de8787"></i><i style="background:#e9afaf"></i><i style="background:#f4d7d7"></i><i style="background:#241c1c"></i><i style="background:#483737"></i><i style="background:#6c5353"></i><i style="background:#916f6f"></i><i style="background:#ac9393"></i><i style="background:#c8b7b7"></i><i style="background:#e3dbdb"></i><i style="background:#2b1100"></i><i style="background:#552200"></i><i style="background:#803300"></i><i style="background:#aa4400"></i><i style="background:#d45500"></i><i style="background:#ff6600"></i><i style="background:#ff7f2a"></i><i style="background:#ff9955"></i><i style="background:#ffb380"></i><i style="background:#ffccaa"></i><i style="background:#ffe6d5"></i><i style="background:#28170b"></i><i style="background:#502d16"></i><i style="background:#784421"></i><i style="background:#a05a2c"></i><i style="background:#c87137"></i><i style="background:#d38d5f"></i><i style="background:#deaa87"></i><i style="background:#e9c6af"></i><i style="background:#f4e3d7"></i><i style="background:#241f1c"></i><i style="background:#483e37"></i><i style="background:#6c5d53"></i><i style="background:#917c6f"></i><i style="background:#ac9d93"></i><i style="background:#c8beb7"></i><i style="background:#e3dedb"></i><i style="background:#2b2200"></i><i style="background:#554400"></i><i style="background:#806600"></i><i style="background:#aa8800"></i><i style="background:#d4aa00"></i><i style="background:#ffcc00"></i><i style="background:#ffd42a"></i><i style="background:#ffdd55"></i><i style="background:#ffe680"></i><i style="background:#ffeeaa"></i><i style="background:#fff6d5"></i><i style="background:#28220b"></i><i style="background:#504416"></i><i style="background:#786721"></i><i style="background:#a0892c"></i><i style="background:#c8ab37"></i><i style="background:#d3bc5f"></i><i style="background:#decd87"></i><i style="background:#e9ddaf"></i><i style="background:#f4eed7"></i><i style="background:#24221c"></i><i style="background:#484537"></i><i style="background:#6c6753"></i><i style="background:#918a6f"></i><i style="background:#aca793"></i><i style="background:#c8c4b7"></i><i style="background:#e3e2db"></i><i style="background:#222b00"></i><i style="background:#445500"></i><i style="background:#668000"></i><i style="background:#88aa00"></i><i style="background:#aad400"></i><i style="background:#ccff00"></i><i style="background:#d4ff2a"></i><i style="background:#ddff55"></i><i style="background:#e5ff80"></i><i style="background:#eeffaa"></i><i style="background:#f6ffd5"></i>
  <b class="pal-end"></b><i class="sarrow left pal-arrow"></i>
</div>
<div class="palscroll"><i class="sarrow left"></i><div class="htrough pal"><div class="palthumb"><span class="grip">|||</span></div></div><i class="sarrow right"></i></div>

<footer class="status">
  <div class="fs">
    <div class="fs-row"><span class="fs-l">Relleno:</span><span class="fs-sw"></span></div>
    <div class="fs-row"><span class="fs-l">Trazo:</span><em class="fs-none">Ninguno</em></div>
  </div>
  <label class="lbl l-o">O:</label>
  <div class="spin s-o"><span class="val">0</span><span class="arrows"><i class="up dim"></i><i class="down"></i></span></div>
  <span class="st-sep"></span>
  <svg class="ic16 st-eye" viewBox="0 0 16 16"><path d="M1 8c3-5 11-5 14 0-3 6-11 6-14 0z"/><circle cx="8" cy="8" r="3" fill="#fff"/><circle cx="8" cy="8" r="1.500"/><path stroke="#000" d="M3 2l1 2M6 1v3M10 1v3M13 2l-1 2"/></svg>
  <svg class="ic16 st-lock"><use href="#a-lock"/></svg>
  <div class="layer"><span>•Capa 1</span><span class="arrows plain"><i class="up"></i><i class="down"></i></span></div>
  <p class="msg"><b>Trayecto</b> 4 nodos en capa <b>Capa 1</b>. Pulse en la selección para conmutar los tiradores de escalado/rotación.</p>
  <div class="coords">
    <div><span>X:</span><span>-57,07</span></div>
    <div><span>Y:</span><span>316,74</span></div>
  </div>
  <label class="lbl l-z">Z:</label>
  <div class="spin s-z"><span class="val">70%</span><span class="arrows"><i class="up"></i><i class="down"></i></span></div>
</footer>

<div class="dock">
  <svg class="wall" viewBox="0 0 1920 57" preserveAspectRatio="none"><g fill="none" stroke="#575a56" stroke-opacity=".2" stroke-width="14"><path d="M1000 60c40-40 120-55 190-40 60 12 100 30 130 60"/><path d="M1480 0c50 40 90 50 170 40 60-8 110-20 150-10"/></g></svg>
  <span class="app"><svg class="dk" viewBox="0 0 48 48"><circle cx="24" cy="27" r="19" fill="#ff8a1f"/><path fill="#ffcc2a" d="M33 2c8 8 13 18 10 29-2-10-8-16-16-18 6-2 8-6 6-11z"/><circle cx="24" cy="26" r="13" fill="#8a3fb5"/><path fill="#e9305a" d="M6 30c3 12 13 17 21 16 6-1 10-4 13-8-8 6-22 4-34-8z"/><circle cx="24" cy="24" r="7" fill="#b560d0"/></svg><i class="run"></i></span>
  <span class="app cur"><svg class="dk"><use href="#p-logo"/></svg><i class="run"></i></span>
  <span class="app"><svg class="dk" viewBox="0 0 48 48"><circle cx="24" cy="26" r="20" fill="#1f6fc8"/><path fill="#0a3d91" d="M8 12c-6 12-4 28 8 33-5-9-6-22-8-33z"/><path fill="#f2f2f2" d="M12 24l20-4 8 12-18 6z"/><path fill="#c8c8d0" d="M12 24l14 6 14 2-18 6z"/><path fill="#4aa3e8" d="M20 6c10-4 20 2 22 14-6-6-14-8-22-14z"/></svg></span>
  <span class="app"><svg class="dk" viewBox="0 0 48 48"><rect x="6" y="3" width="36" height="42" rx="2" fill="#8d8c88"/><rect x="6" y="3" width="36" height="5" fill="#bcbab6"/><rect x="10" y="9" width="28" height="10" fill="#5d4a3a"/><rect x="11" y="10" width="26" height="7" fill="#e8b07a"/><rect x="11" y="13" width="26" height="2" fill="#f6e6c8"/><rect x="6" y="20" width="36" height="25" fill="#7a7976"/><rect x="19" y="27" width="10" height="8" rx="1" fill="#d8d8d4"/><rect x="22" y="29" width="4" height="3" fill="#666"/></svg><i class="run"></i></span>
  <span class="app"><svg class="dk" viewBox="0 0 48 48"><path fill="#fff" stroke="#1e8a1e" stroke-width="1.500" d="M8 2h22l10 10v34H8z"/><path fill="#1e8a1e" d="M31 2h9v10z"/><g fill="#c4e29a" stroke="#4a9a2a" stroke-width=".7"><rect x="13" y="19" width="7" height="5"/><rect x="20" y="19" width="7" height="5"/><rect x="27" y="19" width="7" height="5"/><rect x="13" y="24" width="7" height="5"/><rect x="20" y="24" width="7" height="5"/><rect x="27" y="24" width="7" height="5"/></g><rect x="15" y="35" width="4" height="7" fill="#3a8fd0"/><rect x="21" y="31" width="4" height="11" fill="#f0a030"/><rect x="27" y="34" width="4" height="8" fill="#6ab52a"/></svg></span>
  <span class="app"><svg class="dk" viewBox="0 0 48 48"><path fill="#fff" stroke="#b04a18" stroke-width="1.500" d="M8 2h22l10 10v34H8z"/><path fill="#a8410f" d="M31 2h9v10z"/><rect x="12" y="16" width="24" height="18" fill="#f6e6d2" stroke="#c86a30"/><rect x="14" y="18" width="20" height="3" fill="#e09a60"/><rect x="15" y="24" width="6" height="6" fill="#e9884a"/><rect x="24" y="23" width="9" height="8" fill="#8ab84a"/><path stroke="#888" stroke-width="1.500" fill="none" d="M19 41l5-4 5 4"/></svg></span>
  <span class="app"><svg class="dk" viewBox="0 0 48 48"><path fill="#fff" stroke="#0f5a9a" stroke-width="1.500" d="M8 2h22l10 10v34H8z"/><path fill="#0f5a9a" d="M31 2h9v10z"/><rect x="21" y="17" width="15" height="12" fill="#6aa7d8"/><path fill="#3a7a4a" d="M21 29l6-7 9 7z"/><g stroke="#3a7ab0" stroke-width="1.500"><path d="M12 19h7M12 23h7M12 27h7M12 32h24M12 36h24M12 40h18"/></g></svg></span>
  <span class="app"><svg class="dk" viewBox="0 0 48 48"><ellipse cx="24" cy="26" rx="22" ry="20" fill="#4a6480" fill-opacity=".45"/><rect x="12" y="3" width="24" height="43" rx="9" fill="#e9e7de"/><circle cx="24" cy="24" r="10" fill="#7a6a30"/><circle cx="24" cy="24" r="7" fill="#d8b520"/><circle cx="24" cy="24" r="2.500" fill="#3a3418"/><rect x="20" y="6" width="8" height="4" rx="2" fill="#bbb"/></svg></span>
  <span class="app"><svg class="dk" viewBox="0 0 48 48"><path fill="#11a4e2" d="M8 2h36v32L30 46H8z"/><path fill="none" stroke="#fff" stroke-width="7" d="M33 14H22c-4 0-6 3-6 6v6c0 3 2 6 6 6h11"/></svg></span>
  <span class="app"><svg class="dk" viewBox="0 0 48 48"><rect x="8" y="2" width="32" height="44" rx="3" fill="#d9d8d4" stroke="#888"/><rect x="12" y="6" width="24" height="8" fill="#a9c69a" stroke="#666"/><g fill="#555"><circle cx="16" cy="21" r="2.500"/><circle cx="24" cy="21" r="2.500"/><circle cx="32" cy="21" r="2.500"/><circle cx="16" cy="29" r="2.500"/><circle cx="24" cy="29" r="2.500"/><circle cx="16" cy="37" r="2.500"/><circle cx="24" cy="37" r="2.500"/></g><rect x="30" y="26" width="4" height="15" rx="2" fill="#ec8a2a"/></svg></span>
  <span class="app"><svg class="dk" viewBox="0 0 48 48"><rect x="3" y="12" width="42" height="28" rx="3" fill="#d8d7d4" stroke="#888"/><rect x="10" y="9" width="12" height="4" fill="#bbb"/><circle cx="25" cy="27" r="12" fill="#8e8e8c" stroke="#ddd" stroke-width="2"/><circle cx="25" cy="27" r="8" fill="#444"/><circle cx="25" cy="27" r="4.500" fill="#3a5aa0"/></svg></span>
  <span class="app"><svg class="dk" viewBox="0 0 48 48"><circle cx="24" cy="24" r="23" fill="#008c95"/><circle cx="24" cy="24" r="20" fill="#109ca5"/><g fill="none" stroke="#fff" stroke-width="3"><circle cx="15" cy="25" r="6.500"/><circle cx="32" cy="25" r="6.500"/></g><path stroke="#fff" stroke-width="1.500" d="M12.500 25h5M29.500 25h5M32 22.500v5"/></svg></span>
  <div class="grid9"><i></i><i></i><i></i><i></i><i></i><i></i><i></i><i></i><i></i></div>
</div>

<div class="tooltip">Reflejar los objetos seleccionados verticalmente (V)</div>
</body>
</html>
```

FILE: styles.css
```css
* {
  box-sizing: border-box;
}
html, body {
  margin: 0;
  padding: 0;
}
body {
  width: 1920px;
  height: 1080px;
  overflow: hidden;
  position: relative;
  display: flex;
  flex-direction: column;
  font-family: "Noto Sans", sans-serif;
  font-size: 14px;
  color: #3c3c3c;
  background: #f2f1f0;
}
i {
  display: block;
  font-style: normal;
}
svg {
  display: block;
}
.defs {
  position: absolute;
  width: 0;
  height: 0;
}
.svg-a {
  font: bold 30px "Liberation Sans", sans-serif;
  fill: #000;
}
.svg-a2 {
  font: bold 23px "Liberation Sans", sans-serif;
  fill: #000;
  stroke: #fff;
  stroke-width: .4px;
  text-anchor: middle;
}
.svg-t {
  font: bold 32px "Liberation Serif", serif;
  fill: #000;
  text-anchor: middle;
}
.ic14 { width: 14px; height: 14px; }
.ic16 { width: 16px; height: 16px; }
.ic18 { width: 18px; height: 18px; }
.ic20 { width: 20px; height: 20px; }
.ic24 { width: 24px; height: 24px; }

/* barra superior de gnome */
.topbar {
  height: 27px;
  flex: none;
  display: flex;
  align-items: center;
  justify-content: space-between;
  position: relative;
  padding: 0 15px 1px 12px;
  background: linear-gradient(#55534c, #45433e);
  color: #dfdbd2;
  font-weight: 600;
  font-size: 14.7px;
}
.topbar-left {
  display: flex;
  align-items: center;
}
.ico-logo {
  width: 16px;
  height: 16px;
  margin: 0 5px 0 21px;
}
.caret {
  width: 0;
  height: 0;
  margin-left: 6px;
  border: 5px solid transparent;
  border-top: 5px solid #c9c7c0;
  border-bottom: 0;
}
.clock {
  position: absolute;
  left: 0;
  right: 0;
  text-align: center;
  top: 2px;
  font-size: 14px;
}
.topbar-right {
  display: flex;
  align-items: center;
  gap: 12px;
}
.topbar-right .caret {
  margin-left: -2px;
}
.tray {
  width: 16px;
  height: 16px;
}

.titlebar {
  height: 28px;
  flex: none;
  display: flex;
  align-items: center;
  justify-content: center;
  position: relative;
  padding-bottom: 1px;
  background: linear-gradient(#44423d, #3e3d38);
  color: #dfdbd2;
  font-weight: 700;
  font-size: 14.2px;
}
.wbtns {
  position: absolute;
  right: 5px;
  top: 6px;
  display: flex;
  gap: 4px;
}
.wbtn {
  width: 16px;
  height: 16px;
  border-radius: 50%;
  background: #7c7b76;
  color: #3a3935;
  font-size: 11px;
  line-height: 15px;
  text-align: center;
}
.wbtn.close {
  background: #e9672e;
  color: #5a2008;
}

.menubar {
  height: 23px;
  flex: none;
  display: flex;
  align-items: center;
  gap: 14.4px;
  padding: 0 0 1px 7px;
  background: #3c3b37;
  color: #d6d3cb;
  font-size: 14.6px;
}

/* toolbar */
.toolbar {
  height: 35px;
  flex: none;
  display: flex;
  align-items: center;
  background: #f2f1f0;
}
.tb {
  width: 30.4px;
  height: 31px;
  display: flex;
  align-items: center;
  justify-content: center;
  flex: none;
}
.tb26 {
  width: 26px;
  margin-right: 3px;
}
.tb-on {
  width: 27px;
  height: 31px;
  flex: none;
  display: flex;
  align-items: center;
  justify-content: center;
  border: 1px solid #c9c7c2;
  border-radius: 4px;
  background: linear-gradient(#f7f7f6, #eceae8);
}
.tb .tb-on {
  background: #fbfbfa;
}
.bt1, .bt2, .bt3 {
  background: linear-gradient(#eeedeb, #dddbd8);
  border-color: #bdbbb6;
}
.bt2 { margin-left: 4px; }
.bt3 { margin-left: 3px; }
.tb-sep {
  width: 10px;
  height: 24px;
  flex: none;
  display: flex;
  justify-content: center;
  background: linear-gradient(#d6d4d0, #d6d4d0) center/1px 100% no-repeat;
}
.sep12 {
  width: 12px;
}
.sep16 {
  width: 16px;
}
.lbl {
  flex: none;
  text-align: right;
  font-size: 13px;
  color: #77756f;
  padding-right: 4px;
}
.l-x { width: 24px; padding-right: 4px; }
.l-y { width: 26px; padding-right: 4px; }
.l-w { width: 30px; padding-right: 4px; }
.l-h { width: 22px; padding-right: 3px; }
.lock-box {
  width: 37px;
  display: flex;
  justify-content: center;
  flex: none;
}

.spin {
  display: flex;
  flex: none;
  height: 22px;
  border: 1px solid #cfcdc9;
  border-radius: 4px;
  background: #fff;
  overflow: hidden;
  font-size: 13px;
  color: #444;
}
.val {
  flex: 1;
  padding-left: 5px;
  line-height: 20px;
  white-space: nowrap;
}
.arrows {
  flex: none;
  width: 14px;
  background: #eeedeb;
  border-left: 1px solid #d8d6d2;
  display: flex;
  flex-direction: column;
  align-items: center;
  justify-content: center;
  gap: 4px;
}
.arrows.plain {
  background: transparent;
  border-left: 0;
}
.arrows .up {
  width: 0;
  height: 0;
  border: 3.5px solid transparent;
  border-bottom: 3.5px solid #666;
  border-top: 0;
}
.arrows .down {
  width: 0;
  height: 0;
  border: 3.5px solid transparent;
  border-top: 3.5px solid #666;
  border-bottom: 0;
}
.arrows .dim {
  opacity: .4;
}
.s-x { width: 67px; }
.s-w { width: 65px; }
.s-h { width: 68px; }
.s-unit {
  width: 49px;
  margin-left: 2px;
  background: #f4f3f2;
}
.s-c {
  width: 58px;
  height: 25px;
  margin-left: 9px;
}
.s-c .val {
  line-height: 23px;
  font-size: 14px;
}
.s-c .arrows {
  width: 16px;
}
.s-o {
  width: 46px;
  height: 21px;
}
.s-z {
  width: 53px;
  height: 21px;
}

/* area de trabajo */
.work {
  flex: 1;
  min-height: 0;
  display: flex;
  height: 848px;
}
.tools {
  width: 37px;
  flex: none;
  padding-top: 3px;
  display: flex;
  flex-direction: column;
  align-items: flex-start;
}
.tool {
  width: 34px;
  height: 32px;
  display: flex;
  align-items: center;
  justify-content: center;
}
.tool.active {
  height: 29px;
  width: 29px;
  margin: 0 2px 2px 3px;
  border: 1px solid #c6c4bf;
  border-radius: 4px;
  background: #e9e8e6;
}

.desk {
  width: 1433px;
  flex: none;
  display: grid;
  grid-template-columns: 17px 1385px 31px;
  grid-template-rows: 21px 807px 20px;
}
.corner {
  display: flex;
  align-items: center;
  justify-content: center;
  padding-bottom: 2px;
}
.corner-lock {
  width: 13px;
  height: 13px;
}
.hruler {
  display: flex;
  position: relative;
  overflow: hidden;
  border-bottom: 1px solid #555;
}
.hcell {
  width: 66.2px;
  flex: none;
  height: 20px;
  padding: 2px 0 0 2px;
  font-size: 10px;
  line-height: 11px;
  letter-spacing: -.2px;
  color: #55555a;
  border-left: 1px solid #777;
  background:
    repeating-linear-gradient(90deg, transparent 0 5.62px, #555 5.62px 6.62px) bottom / 100% 3px no-repeat,
    repeating-linear-gradient(90deg, transparent 0 12.24px, #555 12.24px 13.24px) bottom / 100% 6px no-repeat;
}
.hcell.first {
  margin-left: -31.2px;
}
.pointer {
  position: absolute;
  left: 176px;
  bottom: 0;
  width: 0;
  height: 0;
  border: 5px solid transparent;
  border-top: 6px solid #555;
  border-bottom: 0;
}
.rcorner {
  padding: 4px 0 0 6px;
}
.rcorner-btn {
  display: block;
  width: 13px;
  height: 15px;
  border: 1px solid #bdbbb7;
  border-radius: 3px;
  background: #eceae8;
}
.vruler {
  overflow: hidden;
  border-right: 1px solid #555;
  position: relative;
}
.vcell {
  display: block;
  height: 132.4px;
  border-top: 1px solid #777;
  padding: 2px 9px 0 1px;
  width: 100%;
  font-size: 10.5px;
  line-height: 9px;
  color: #6f7a8a;
  word-break: break-all;
  overflow-wrap: anywhere;
  background:
    repeating-linear-gradient(180deg, transparent 0 12.24px, #555 12.24px 13.24px) right / 5px 100% no-repeat,
    repeating-linear-gradient(180deg, transparent 0 25.48px, #555 25.48px 26.48px) right / 8px 100% no-repeat;
}
.vcell.first {
  margin-top: -84.4px;
}
.pointer-v {
  position: absolute;
  right: 0;
  top: 0;
  width: 0;
  height: 0;
  border: 5px solid transparent;
  border-left: 6px solid #555;
  border-right: 0;
}
.canvas {
  background: #fff;
  overflow: hidden;
}
.drawing {
  width: 1385px;
  height: 807px;
}

.vscroll {
  padding: 3px 0 0 6px;
}
.vtrack {
  width: 14px;
  height: 800px;
  display: flex;
  flex-direction: column;
  align-items: center;
  border: 1px solid #c9c7c3;
  border-radius: 7px;
  background: #f6f5f4;
  overflow: hidden;
}
.vtrough {
  flex: 1;
  width: 100%;
  background: #e3e2e0;
  padding-top: 250px;
  padding-bottom: 282px;
  border-radius: 6px;
}
.vthumb {
  height: 249px;
  border-radius: 6px;
  border: 1px solid #c6c4c0;
  background: #f9f9f8;
}
.sarrow {
  flex: none;
  width: 0;
  height: 0;
  margin: 4px;
  border: 3.5px solid transparent;
}
.sarrow.up { border-bottom: 4px solid #666; border-top: 0; }
.sarrow.down { border-top: 4px solid #666; border-bottom: 0; }
.sarrow.left { border-right: 4px solid #666; border-left: 0; }
.sarrow.right { border-left: 4px solid #666; border-right: 0; }

.blank {
  grid-column: 1;
}
.hscroll {
  margin: 3px 2px 4px 2px;
  display: flex;
  align-items: center;
  height: 13px;
  border: 1px solid #c9c7c3;
  border-radius: 7px;
  background: #f6f5f4;
  overflow: hidden;
}
.htrough {
  flex: 1;
  height: 100%;
  background: #e3e2e0;
  display: flex;
  padding-left: 243px;
  padding-right: 65px;
  border-radius: 6px;
}
.hthumb, .palthumb {
  flex: 1;
  border: 1px solid #c6c4c0;
  border-radius: 6px;
  background: #f9f9f8;
  text-align: center;
}
.grip {
  display: block;
  font-size: 8px;
  line-height: 10px;
  color: #aaa;
}
.cms {
  padding: 3px 0 0 4px;
}

/* panel relleno y borde */
.panel {
  width: 385px;
  flex: none;
  margin-top: 2px;
  border: 1px solid #cfcdc9;
  display: flex;
  flex-direction: column;
}
.ptitle {
  height: 25px;
  display: flex;
  align-items: center;
  padding: 0 0 2px 1px;
  flex: none;
}
.ptitle-text {
  font-size: 14.4px;
  color: #444;
}
.pbtn {
  position: relative;
  width: 11px;
  height: 11px;
  border: 1px solid #aaa8a4;
  border-radius: 2px;
  background: #e6e5e3;
  font-size: 10px;
  line-height: 8px;
  text-align: center;
  color: #555;
}
.b1 { margin-left: auto; }
.b2 { margin: 0 36px 0 13px; }
.pb-left {
  width: 0;
  height: 0;
  margin: 1px 0 0 2px;
  border: 3px solid transparent;
  border-right: 4px solid #777;
  border-left: 0;
}
.pbody {
  display: flex;
  flex: none;
}
.frame {
  width: 352px;
  margin-left: 1px;
  height: 381px;
  border: 1px solid #d5d3cf;
  padding: 2px 4px 0 5px;
  display: flex;
  flex-direction: column;
  background: #f2f1f0;
}
.tabs {
  display: flex;
  height: 29px;
  align-items: flex-end;
  gap: 2px;
  flex: none;
}
.tab {
  height: 25px;
  display: flex;
  align-items: center;
  padding-left: 5px;
  background: #eae9e7;
  border: 1px solid #d3d1cd;
  border-bottom: 0;
  border-radius: 3px 3px 0 0;
  font-size: 14.3px;
  color: #6b6a66;
  width: 122px;
}
.tab.on {
  width: 77px;
  height: 29px;
  padding-left: 4px;
  background: #f5f5f5;
  color: #444;
  margin-bottom: -1px;
  position: relative;
  z-index: 1;
}
.tab-wide {
  width: 124px;
}
.tab-ic {
  width: 11px;
  height: 13px;
  margin-right: 5px;
  flex: none;
}
.flat {
  background: linear-gradient(135deg, #86a8d0, #eef3f8);
}
.empty {
  border: 1px solid #555;
  background: #fff;
}
.tab-svg {
  width: 13px;
  height: 14px;
  margin-right: 5px;
  flex: none;
}
.page {
  height: 278px;
  flex: none;
  border: 1px solid #d5d3cf;
  border-radius: 0 3px 3px 3px;
  background: #f5f5f5;
  padding: 7px 7px 0 6px;
}
.ftypes {
  height: 26px;
  display: flex;
  align-items: center;
}
.ft {
  width: 28px;
  height: 26px;
  flex: none;
  display: flex;
  align-items: center;
  justify-content: center;
  font-weight: 700;
  color: #000;
}
.ft.x {
  width: 27px;
  font-size: 17px;
}
.ft.q {
  font-size: 21px;
  font-family: "Liberation Sans", sans-serif;
}
.flatb {
  width: 26px;
  margin: 0 2px 0 0;
  border: 1px solid #c3c1bc;
  border-radius: 4px;
  background: #e3e2e0;
}
.rule {
  width: 24px;
}
.rule1 {
  margin-left: auto;
  margin-right: 2px;
}
.flatb2 {
  width: 20px;
  margin-right: 2px;
  border: 1px solid #c3c1bc;
  border-radius: 4px;
  background: #e3e2e0;
}
.sw {
  width: 16px;
  height: 16px;
  border: 1px solid #3f4a5c;
}
.s-flat { background: #93b2d6; }
.s-lin { background: linear-gradient(90deg, #92afd2, #fff); }
.s-rad { background: radial-gradient(#fff, #92afd2); }
.s-pat { background: conic-gradient(#92afd2 25%, #fff 0 50%, #92afd2 0 75%, #fff 0) 0 0 / 14px 14px; }
.s-mesh { background: radial-gradient(circle at center, #92afd2 45%, #fff 50%) 0 0 / 5px 5px; }
.s-swatch {
  background: #fff;
  box-shadow: inset -2px -2px 0 #92afd2;
  border-width: 2px;
}
.heading {
  margin-top: 9px;
  height: 18px;
  line-height: 18px;
  font-weight: 700;
  font-size: 14px;
  color: #474540;
}
.modes {
  display: flex;
  gap: 3px;
  margin-top: 5px;
}
.mode {
  height: 24px;
  border: 1px solid #c2c0bb;
  border-radius: 4px;
  background: linear-gradient(#f2f1f0, #dfddda);
  text-align: center;
  font-size: 12px;
  line-height: 22px;
  color: #4a4945;
}
.m1 { width: 62px; }
.m2 { width: 61px; }
.m3 { width: 66px; }
.sliders {
  margin-top: 3px;
}
.srow {
  display: flex;
  align-items: center;
  height: 29px;
}
.slabel {
  width: 31px;
  flex: none;
  text-align: right;
  padding-right: 10px;
  font-size: 14px;
  color: #444;
}
.sbar {
  position: relative;
  width: 218px;
  height: 23px;
  flex: none;
  border-radius: 3px;
  box-shadow: 0 0 0 1px #fff;
}
.b-r { background: linear-gradient(90deg, #00d600, #ffd600); }
.b-g { background: linear-gradient(90deg, #f70000, #f7ff00); }
.b-b { background: linear-gradient(90deg, #f7d600, #f7d6ff); }
.b-a {
  background:
    linear-gradient(90deg, rgba(247, 214, 0, 0), #f7d600),
    conic-gradient(#666 25%, #aaa 0 50%, #666 0 75%, #aaa 0) 0 0 / 16px 16px;
}
.tick {
  position: absolute;
  width: 0;
  height: 0;
  margin-left: -4px;
  border: 4px solid transparent;
}
.tick.top {
  top: 0;
  border-top: 4px solid #000;
  border-bottom: 0;
}
.tick.bot {
  bottom: 0;
  border-bottom: 4px solid #000;
  border-top: 0;
}
.dot {
  position: absolute;
  width: 3px;
  height: 3px;
  background: #000;
}
.tl { left: -2px; top: -2px; }
.tr { right: -2px; top: -2px; }
.bl { left: -2px; bottom: -2px; }
.br { right: -2px; bottom: -2px; }
.pickers {
  margin-top: 35px;
  display: flex;
  align-items: center;
  height: 30px;
}
.picker {
  width: 18px;
  height: 30px;
  margin-right: 4px;
  background: #e6e5e3;
}
.pk {
  width: 18px;
  height: 30px;
}
.pk-drop {
  margin-left: 7px;
}
.rgba-l {
  margin-left: auto;
  font-size: 12px;
  color: #555;
  margin-right: 3px;
}
.rgba-i {
  width: 64px;
  height: 22px;
  padding-left: 4px;
  border: 1px solid #cfcdc9;
  border-radius: 4px;
  background: #fff;
  font-size: 13px;
  line-height: 20px;
}
.pspin {
  display: flex;
  width: 340px;
  height: 25px;
  margin-top: 6px;
  border: 1px solid #d0cecb;
  border-radius: 4px;
  background: #fff;
  overflow: hidden;
  flex: none;
  font-size: 14.3px;
}
.pspin-l {
  padding-left: 7px;
  line-height: 23px;
  white-space: nowrap;
}
.pspin-v {
  margin-left: auto;
  padding-right: 7px;
  line-height: 23px;
}
.pspin .arrows {
  width: 16px;
  background: #f2f1f0;
}
.pfill {
  flex: 1;
  display: flex;
  margin: 3px 7px 3px 4px;
  background: #f37a4a;
  color: #fff;
  border-radius: 3px;
  height: 18px;
}
.pfill .pspin-l {
  padding-left: 2px;
  line-height: 17px;
}
.pfill .pspin-v {
  line-height: 17px;
  padding-right: 0;
}
.page + .pspin {
  margin-top: 7px;
}
.vtab {
  width: 30px;
  margin-left: 1px;
  display: flex;
  flex-direction: column;
  align-items: center;
  margin-top: -20px;
  padding-left: 2px;
}
.vtab-t {
  writing-mode: vertical-rl;
  transform: rotate(180deg);
  font-size: 14.3px;
  line-height: 14px;
  color: #55534f;
  white-space: nowrap;
}
.gear {
  width: 16px;
  height: 16px;
  margin-top: 1px;
}
.phandle {
  width: 352px;
  text-align: center;
  font-size: 8px;
  color: #aaa;
  line-height: 10px;
}

/* barras laterales derecha */
.rbar {
  flex: 1;
  display: flex;
  padding-top: 2px;
}
.rcol {
  width: 32px;
  display: flex;
  flex-direction: column;
  align-items: center;
}
.rcol:first-child {
  width: 33px;
}
.rb {
  height: 30px;
  width: 26px;
  flex: none;
  display: flex;
  align-items: center;
  justify-content: center;
}
.rb.on {
  height: 27px;
  margin: 1.500px 0;
  border: 1px solid #c9c7c2;
  border-radius: 4px;
  background: linear-gradient(#f0efed, #e2e0dd);
}
.rsep {
  width: 20px;
  height: 12px;
  flex: none;
  background: linear-gradient(#dcdad6, #dcdad6) center/100% 1px no-repeat;
}
.rsep.first {
  height: 10px;
}
.rsep.wide {
  height: 14px;
}
.more {
  width: 0;
  height: 0;
  border: 4px solid transparent;
  border-left: 5px solid #888;
  border-right: 0;
}

/* paleta */
.palette {
  height: 18px;
  flex: none;
  display: flex;
  align-items: stretch;
  padding: 1px 0;
  border-top: 1px solid #d0cecb;
}
.palette > i:not(.sarrow) {
  width: 16.02px;
  flex: none;
}
.none-sw {
  width: 16px;
  flex: none;
  background:
    linear-gradient(45deg, transparent 47%, #7a1a1a 47% 53%, transparent 53%),
    linear-gradient(-45deg, transparent 47%, #7a1a1a 47% 53%, transparent 53%),
    #fff;
}
.pal-end {
  width: 2px;
  background: #222;
  margin-left: 1px;
}
.pal-arrow {
  align-self: center;
  margin-left: 3px;
}
.palscroll {
  height: 13px;
  flex: none;
  display: flex;
  align-items: center;
  margin: 2px 13px 0 0;
  border: 1px solid #c9c7c3;
  border-radius: 7px;
  background: #f6f5f4;
  overflow: hidden;
}
.htrough.pal {
  padding: 0;
}
.palthumb {
  flex: none;
  width: 516px;
}

/* barra de estado */
.status {
  height: 30px;
  flex: none;
  display: flex;
  align-items: center;
  font-size: 13px;
  position: relative;
}
.fs {
  width: 124px;
  flex: none;
  padding-left: 2px;
}
.fs-row {
  display: flex;
  align-items: center;
  height: 13.500px;
  font-size: 12px;
  color: #666;
}
.fs-l {
  width: 48px;
}
.fs-sw {
  width: 72px;
  height: 14px;
  background: #f7d600;
}
.fs-none {
  margin-left: 15px;
  font-size: 12px;
}
.l-o {
  width: 17px;
  padding-right: 2px;
  font-size: 12.500px;
}
.st-sep {
  width: 1px;
  height: 26px;
  margin: 0 7px 0 3px;
  background: #d6d4d0;
}
.st-lock {
  margin: 0 5px 0 8px;
}
.layer {
  width: 87px;
  height: 26px;
  flex: none;
  display: flex;
  align-items: center;
  justify-content: space-between;
  padding-left: 6px;
  border: 1px solid #c9c7c3;
  border-radius: 4px;
  font-weight: 600;
  font-size: 12.500px;
  color: #444;
  background: #f4f3f2;
}
.msg {
  margin: 0 0 0 3px;
  font-size: 14.15px;
  white-space: nowrap;
  color: #444;
}
.coords {
  margin-left: auto;
  width: 69px;
  height: 28px;
  border-left: 1px solid #d6d4d0;
  padding-left: 4px;
  font-size: 12px;
  line-height: 14px;
  color: #555;
}
.coords div {
  display: flex;
  justify-content: space-between;
  width: 61px;
}
.l-z {
  width: 19px;
  padding-right: 4px;
  font-size: 12.500px;
}
.s-z {
  margin-right: 2px;
}

/* dock */
.dock {
  height: 57px;
  flex: none;
  display: flex;
  align-items: center;
  position: relative;
  background: #403f3d;
}
.wall {
  position: absolute;
  left: 0;
  top: 0;
  width: 1920px;
  height: 57px;
}
.app {
  position: relative;
  width: 58px;
  height: 54px;
  flex: none;
  display: flex;
  align-items: center;
  justify-content: center;
}
.app.cur::before {
  content: "";
  position: absolute;
  left: 2px;
  right: 2px;
  top: 0;
  bottom: 0;
  border-radius: 3px;
  background: #5a5957;
}
.dk {
  position: relative;
  width: 42px;
  height: 42px;
  margin-bottom: 1px;
}
.run {
  position: absolute;
  left: 27px;
  bottom: 0;
  width: 4px;
  height: 4px;
  border-radius: 50%;
  background: #e9672e;
}
.grid9 {
  position: absolute;
  right: 15px;
  top: 17px;
  display: grid;
  grid-template-columns: repeat(3, 5px);
  grid-auto-rows: 5px;
  gap: 5px;
}
.grid9 i {
  border-radius: 50%;
  background: #eee;
}

.tooltip {
  position: absolute;
  left: 225px;
  top: 102px;
  height: 24px;
  width: 355px;
  padding-left: 4px;
  border-radius: 5px;
  background: #1b1b1b;
  color: #f2f2f2;
  font-size: 14.4px;
  line-height: 24px;
  white-space: nowrap;
}
```
